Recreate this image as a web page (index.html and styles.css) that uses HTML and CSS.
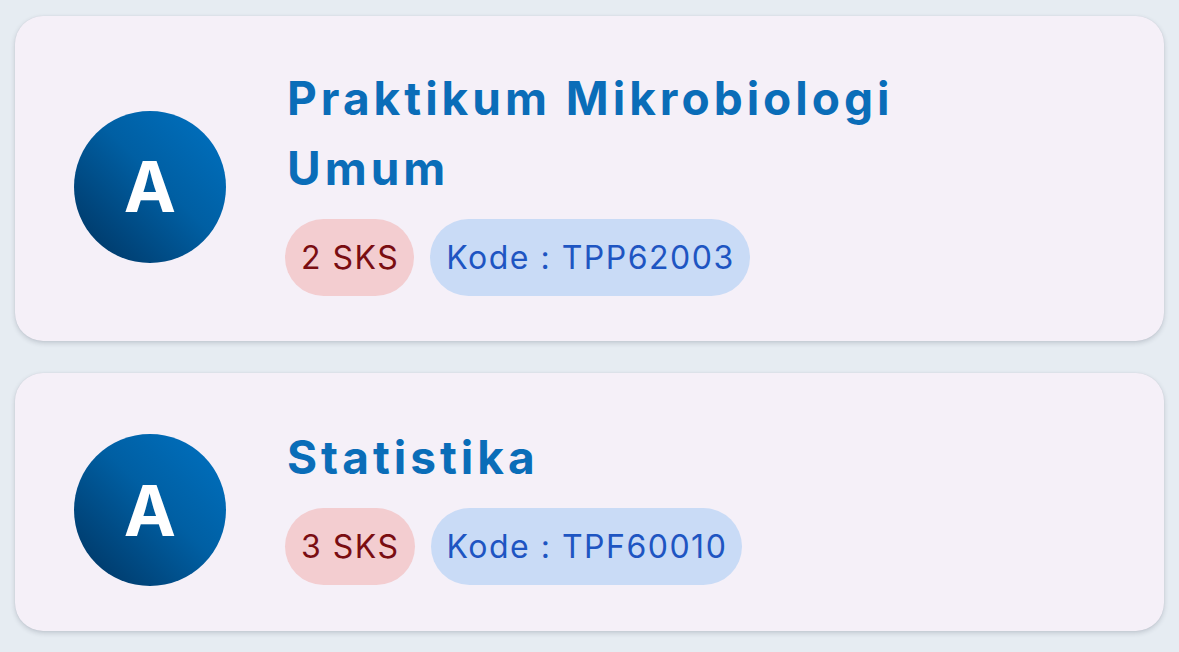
FILE: index.html
```html
<!DOCTYPE html>
<html lang="id">
<head>
<meta charset="utf-8">
<title>Mata Kuliah</title>
<link rel="stylesheet" href="styles.css">
</head>
<body>
<main class="list">
  <article class="card">
    <div class="avatar">A</div>
    <div class="info">
      <h2 class="title">Praktikum Mikrobiologi<br>Umum</h2>
      <div class="badges">
        <span class="badge badge-sks">2 SKS</span>
        <span class="badge badge-kode">Kode : TPP62003</span>
      </div>
    </div>
  </article>
  <article class="card">
    <div class="avatar">A</div>
    <div class="info">
      <h2 class="title">Statistika</h2>
      <div class="badges">
        <span class="badge badge-sks">3 SKS</span>
        <span class="badge badge-kode">Kode : TPF60010</span>
      </div>
    </div>
  </article>
</main>
</body>
</html>
```

FILE: styles.css
```css
* { box-sizing: border-box; }
html, body { margin: 0; padding: 0; }
body {
  background: #e6ecf2;
  font-family: Inter, "Noto Sans", "Liberation Sans", sans-serif;
  width: 1179px;
  height: 652px;
  overflow: hidden;
}
.list {
  display: flex;
  flex-direction: column;
  gap: 32px;
  padding: 16px 15px 0 15px;
}
.card {
  background: #f5f0f8;
  border-radius: 28px;
  box-shadow: 0 2px 5px rgba(40, 50, 70, 0.2), 0 0 1px rgba(40, 50, 70, 0.12);
  display: flex;
  align-items: center;
  gap: 59px;
  padding: 47px 40px 45px 59px;
}
.avatar {
  flex: none;
  width: 152px;
  height: 152px;
  border-radius: 50%;
  background: linear-gradient(225deg, #0072c2 0%, #005fa3 45%, #00325e 100%);
  color: #ffffff;
  font-weight: 700;
  font-size: 70px;
  display: flex;
  align-items: center;
  justify-content: center;
  margin-top: 14px;
}
.info {
  display: flex;
  flex-direction: column;
  gap: 16px;
}
.title {
  margin: 0 0 0 2px;
  color: #0a6db8;
  font-size: 46px;
  font-weight: 700;
  line-height: 70px;
  letter-spacing: 4px;
}
.badges {
  display: flex;
  gap: 16px;
}
.badge {
  height: 77px;
  display: flex;
  align-items: center;
  padding: 0 15px 0 16px;
  border-radius: 39px;
  font-size: 32px;
  letter-spacing: 1.5px;
}
.badge-sks {
  background: #f3cdd0;
  color: #7a0d12;
}
.badge-kode {
  background: #c9dbf6;
  color: #1e55c2;
}
```
